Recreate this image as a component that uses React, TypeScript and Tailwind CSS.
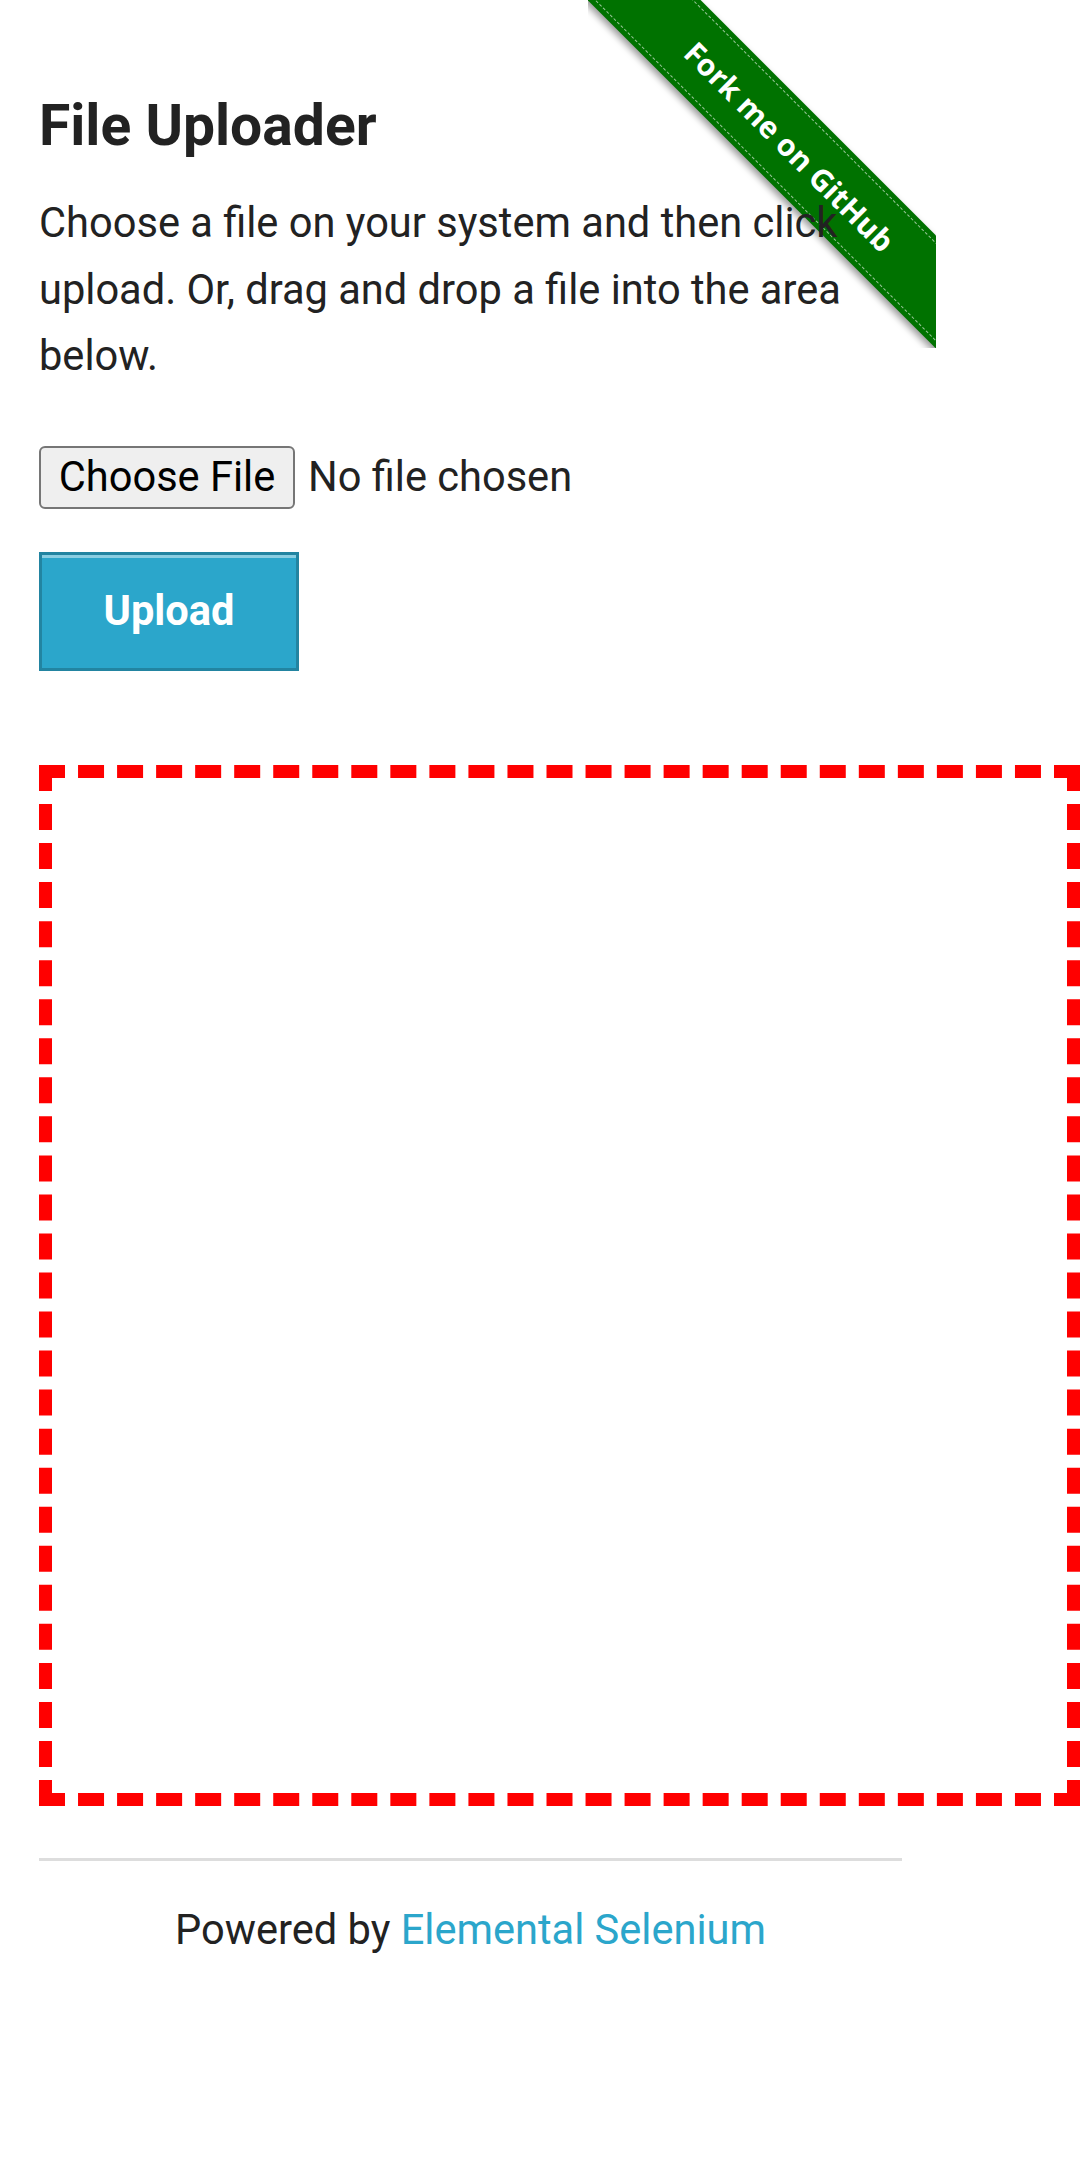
export default function App() {
  return (
    <div className="relative min-h-[2168px] w-[1080px] overflow-hidden bg-white font-['Roboto',sans-serif] text-[#222222]">
      {/* github ribbon, sits under the page text */}
      <a className="absolute left-[588px] top-0 h-[348px] w-[348px] overflow-hidden">
        <div className="absolute left-[-58px] top-[106px] flex h-[80px] w-[520px] rotate-45 items-center justify-center bg-[#007200] shadow-[0_4px_7px_rgba(0,0,0,0.4)]">
          <div className="absolute inset-x-0 top-[5px] border-t border-dashed border-white/60" />
          <div className="absolute inset-x-0 bottom-[5px] border-b border-dashed border-white/60" />
          <span className="font-['Open_Sans',sans-serif] text-[30px] font-bold text-white">Fork me on GitHub</span>
        </div>
      </a>

      <div className="relative flex w-[941px] flex-col items-start px-[39px] pt-[92px]">
        <h3 className="text-[57px] font-bold leading-[68px]">File Uploader</h3>
        <p className="mt-[30px] text-[41.6px] leading-[66.6px]">
          Choose a file on your system and then click upload. Or, drag and drop a file into the area below.
        </p>

        {/* file input */}
        <div className="mt-[56px] flex h-[63px] items-center gap-[13px]">
          <span className="flex h-[63px] w-[256px] items-center justify-center rounded-[6px] border-2 border-[#767676] bg-[#efefef] text-[41.6px] text-black">
            Choose File
          </span>
          <span className="text-[41.6px]">No file chosen</span>
        </div>

        <button className="mt-[43px] h-[119px] w-[260px] border-[3px] border-[#2284a1] bg-[#2ba6cb] text-[41.6px] font-bold text-white shadow-[inset_0_3px_0_rgba(255,255,255,0.45)]">
          Upload
        </button>

        {/* drop area */}
        <div className="mt-[94px] h-[1041px] w-[1041px] shrink-0 border-[13px] border-dashed border-[#ff0000]" />

        <div className="mt-[52px] h-[3px] w-[863px] bg-[#dddddd]" />
        <div className="mt-[36px] w-[863px] text-center text-[41.6px] leading-[66.6px]">
          Powered by <a className="text-[#2ba6cb]">Elemental Selenium</a>
        </div>
      </div>
    </div>
  )
}
